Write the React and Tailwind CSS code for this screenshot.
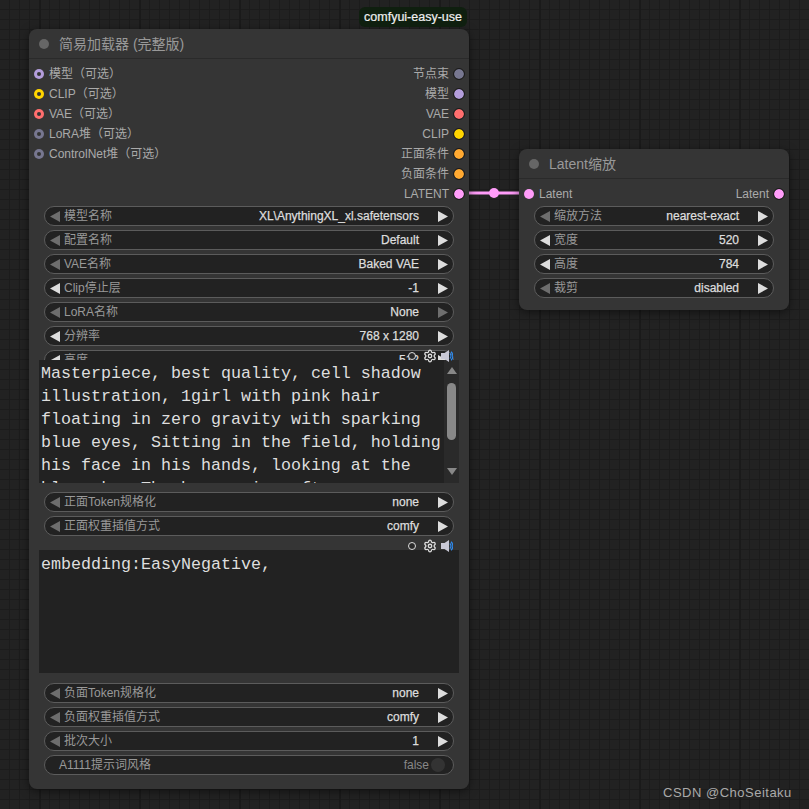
import { Settings } from "lucide-react";

const SANS = "font-['Liberation_Sans','Noto_Sans_CJK_SC',sans-serif]";

const SLOT = {
  model: "bg-[#b39ddb]",
  clip: "bg-[#ffd500]",
  vae: "bg-[#ff6e6e]",
  stack: "bg-[#777790]",
  cond: "bg-[#ffa931]",
  latent: "bg-[#ff9cf9]",
};

const mainInputs = [
  ["模型（可选）", "model"],
  ["CLIP（可选）", "clip"],
  ["VAE（可选）", "vae"],
  ["LoRA堆（可选）", "stack"],
  ["ControlNet堆（可选）", "stack"],
];

const mainOutputs = [
  ["节点束", "stack"],
  ["模型", "model"],
  ["VAE", "vae"],
  ["CLIP", "clip"],
  ["正面条件", "cond"],
  ["负面条件", "cond"],
  ["LATENT", "latent"],
];

const loaderWidgets = [
  { label: "模型名称", value: "XL\\AnythingXL_xl.safetensors", left: false },
  { label: "配置名称", value: "Default", left: false },
  { label: "VAE名称", value: "Baked VAE", left: false },
  { label: "Clip停止层", value: "-1", left: true },
  { label: "LoRA名称", value: "None", left: false, right: false },
  { label: "分辨率", value: "768 x 1280", left: true },
];

const positiveWidgets = [
  { label: "正面Token规格化", value: "none", left: false },
  { label: "正面权重插值方式", value: "comfy", left: false },
];

const negativeWidgets = [
  { label: "负面Token规格化", value: "none", left: false },
  { label: "负面权重插值方式", value: "comfy", left: false },
  { label: "批次大小", value: "1", left: false },
];

const latentWidgets = [
  { label: "缩放方法", value: "nearest-exact", left: false },
  { label: "宽度", value: "520", left: true },
  { label: "高度", value: "784", left: true },
  { label: "裁剪", value: "disabled", left: false },
];

function Arrow({ dir, on }) {
  return (
    <svg width="10" height="11" viewBox="0 0 10 11" className={on ? "shrink-0 fill-[#dddddd]" : "shrink-0 fill-[#6e6e6e]"}>
      <path d={dir === "left" ? "M0 5.5 10 0v11z" : "M10 5.5 0 0v11z"} />
    </svg>
  );
}

function Widget({ label, value, left = true, right = true }) {
  return (
    <div className="mx-[5px] mb-1 flex h-5 items-center rounded-full border border-[#5c5c5c] bg-[#222222] pl-[5px] pr-[5px] text-xs">
      <Arrow dir="left" on={left} />
      <span className="ml-1 text-[#999999]">{label}</span>
      <span className="ml-auto mr-[19px] text-[#dddddd] [-webkit-text-stroke:0.25px_#dddddd]">{value}</span>
      <Arrow dir="right" on={right} />
    </div>
  );
}

function ToggleWidget({ label, value }) {
  return (
    <div className="mx-[5px] flex h-5 items-center rounded-full border border-[#5c5c5c] bg-[#222222] pl-[14px] pr-[8px] text-xs">
      <span className="text-[#999999]">{label}</span>
      <span className="ml-auto mr-[2px] text-[#888888]">{value}</span>
      <span className="h-[14px] w-[14px] rounded-full bg-[#333333]" />
    </div>
  );
}

function InputSlot({ name, type }) {
  return (
    <div className="flex h-5 items-center gap-[5px]">
      <span className={`flex h-[10px] w-[10px] items-center justify-center rounded-full ${SLOT[type]}`}>
        <span className="h-1 w-1 rounded-full bg-[#333333]" />
      </span>
      <span className="text-xs text-[#aaaaaa]">{name}</span>
    </div>
  );
}

function OutputSlot({ name, type }) {
  return (
    <div className="flex h-5 items-center justify-end gap-[5px]">
      <span className="text-xs text-[#aaaaaa]">{name}</span>
      <span className={`h-[10px] w-[10px] rounded-full outline outline-1 outline-[#1a1a1a] ${SLOT[type]}`} />
    </div>
  );
}

function Header({ title }) {
  return (
    <div className="flex h-[30px] items-center gap-[10px] border-b border-[#2a2a2a] pl-[10px] text-sm text-[#999999]">
      <span className="h-[10px] w-[10px] rounded-full bg-[#666666]" />
      <span>{title}</span>
    </div>
  );
}

function Speaker() {
  return (
    <svg width="12" height="12" viewBox="0 0 12 12" fill="none">
      <path d="M0 3h3.500l4.500-3v12L3.500 9H0z" fill="#c9c9d6" />
      <path d="M8.800 3.500a3.200 3.200 0 0 1 0 5" stroke="#2f8cf0" strokeWidth="1.200" />
      <path d="M10 1.800a5.600 5.600 0 0 1 0 8.400" stroke="#2f8cf0" strokeWidth="1.200" />
    </svg>
  );
}

function TextIcons() {
  return (
    <div className="absolute right-[6px] top-[-11px] flex h-[14px] items-center">
      <span className="mr-[7px] h-2 w-2 rounded-full border border-[#dddddd] bg-[#2a2a2a]" />
      <Settings size={14} strokeWidth={2.2} className="mr-1 text-[#dddddd]" />
      <Speaker />
    </div>
  );
}

function PromptBox({ text, scrollbar }) {
  return (
    <div className="relative mx-[10px] h-[123px] bg-[#222222] font-['Liberation_Mono',monospace] text-[16.67px] leading-[23px] text-[#dedede]">
      <TextIcons />
      <div className="flex h-full">
        <div className={scrollbar ? "h-full min-w-0 flex-1 overflow-hidden pl-[2px] pt-[2px]" : "h-full min-w-0 flex-1 overflow-hidden pl-[2px] pt-[3px]"}>{text}</div>
        {scrollbar ? (
          <div className="flex h-full w-[15px] flex-col items-center bg-[#2a2a2a] pt-[7px]">
            <span className="h-0 w-0 border-x-[5px] border-b-[7px] border-x-transparent border-b-[#888888]" />
            <span className="mt-[9px] h-[57px] w-[9px] rounded-full bg-[#888888]" />
            <span className="mt-auto mb-[8px] h-0 w-0 border-x-[5px] border-t-[7px] border-x-transparent border-t-[#888888]" />
          </div>
        ) : null}
      </div>
    </div>
  );
}

function LoaderNode() {
  return (
    <div className={`absolute left-[29px] top-[29px] w-[440px] rounded-lg bg-[#353535] pb-[14px] shadow-[0_2px_10px_rgba(0,0,0,0.5)] ${SANS}`}>
      <div className="absolute right-[2px] top-[-22px] flex h-5 items-center rounded-md bg-[#0f1f0f] px-[5px] text-[12.500px] text-[#f0f0f0] [-webkit-text-stroke:0.2px_#f0f0f0]">
        comfyui-easy-use
      </div>
      <Header title="简易加载器 (完整版)" />
      <div className="flex justify-between px-[5px] pb-[2px] pt-[5px]">
        <div>
          {mainInputs.map(([name, type]) => (
            <InputSlot key={name} name={name} type={type} />
          ))}
        </div>
        <div>
          {mainOutputs.map(([name, type]) => (
            <OutputSlot key={name} name={name} type={type} />
          ))}
        </div>
      </div>
      <div className="px-[10px]">
        {loaderWidgets.map((w) => (
          <Widget key={w.label} {...w} />
        ))}
        <div className="h-[10px] overflow-hidden">
          <Widget label="高度" value="512" />
        </div>
      </div>
      <PromptBox
        scrollbar
        text="Masterpiece, best quality, cell shadow illustration, 1girl with pink hair floating in zero gravity with sparking blue eyes, Sitting in the field, holding his face in his hands, looking at the blue sky. The breeze is soft"
      />
      <div className="mt-[9px] px-[10px]">
        {positiveWidgets.map((w) => (
          <Widget key={w.label} {...w} />
        ))}
      </div>
      <div className="mt-[14px]">
        <PromptBox text="embedding:EasyNegative," />
      </div>
      <div className="mt-[10px] px-[10px]">
        {negativeWidgets.map((w) => (
          <Widget key={w.label} {...w} />
        ))}
        <ToggleWidget label="A1111提示词风格" value="false" />
      </div>
    </div>
  );
}

function LatentNode() {
  return (
    <div className={`absolute left-[519px] top-[149px] w-[270px] rounded-lg bg-[#353535] pb-2 shadow-[0_2px_10px_rgba(0,0,0,0.5)] ${SANS}`}>
      <Header title="Latent缩放" />
      <div className="flex justify-between px-[5px] pb-[2px] pt-[5px]">
        <div className="flex h-5 items-center gap-[5px]">
          <span className={`h-[10px] w-[10px] rounded-full ${SLOT.latent}`} />
          <span className="text-xs text-[#aaaaaa]">Latent</span>
        </div>
        <OutputSlot name="Latent" type="latent" />
      </div>
      <div className="px-[10px]">
        {latentWidgets.map((w) => (
          <Widget key={w.label} {...w} />
        ))}
      </div>
    </div>
  );
}

export default function App() {
  return (
    <div className="relative h-[809px] w-[809px] overflow-hidden bg-[#222222] bg-[linear-gradient(90deg,#1a1a1a_2px,transparent_2px),linear-gradient(#1c1c1c_1px,transparent_1px),linear-gradient(90deg,#1c1c1c_1px,transparent_1px),linear-gradient(#1c1c1c_1px,transparent_1px)] [background-position:39px_0,0_79px,9px_0,0_9px] [background-size:100px_100px,100px_100px,10px_10px,10px_10px]">
      <svg width="60" height="20" viewBox="0 0 60 20" className="absolute left-[464px] top-[183px]">
        <path d="M0 10h60" stroke="#222222" strokeWidth="5" />
        <path d="M0 10h60" stroke="#ff9cf9" strokeWidth="3" />
        <circle cx="30" cy="10" r="5" fill="#ff9cf9" />
      </svg>
      <LoaderNode />
      <LatentNode />
      <div className="absolute left-[663px] top-[785px] font-['Liberation_Sans',sans-serif] text-[13px] leading-4 tracking-[0.5px] text-[#aaaaaa]">
        CSDN @ChoSeitaku
      </div>
    </div>
  );
}
